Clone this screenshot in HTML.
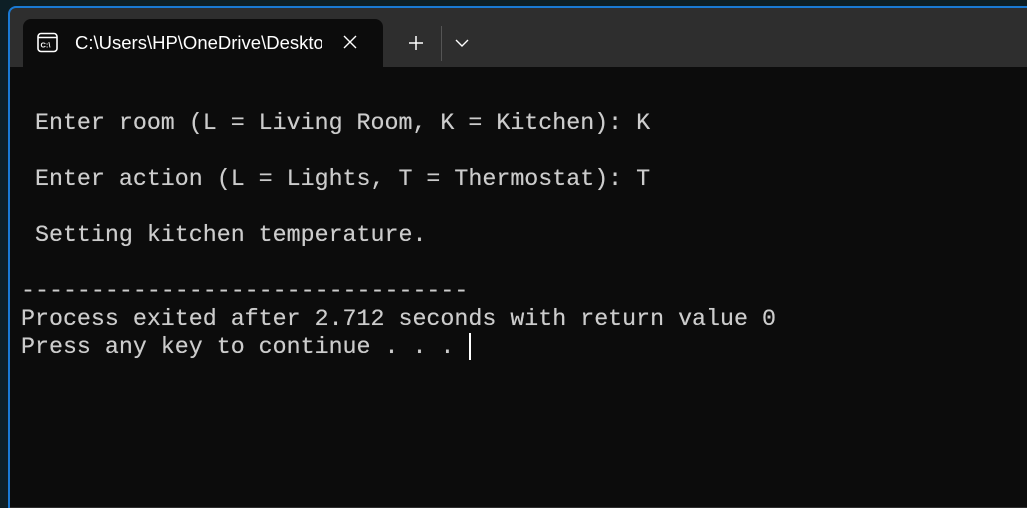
<!DOCTYPE html>
<html><head><style>
html,body{margin:0;padding:0;width:1027px;height:496px;overflow:hidden;background:#0d1f26;}
.win{position:absolute;left:8px;top:6px;width:1030px;height:500px;border:2px solid #1a7ad4;border-right:none;border-bottom:none;border-top-left-radius:8px;background:#2e2e2e;}
.term{position:absolute;left:10px;top:67px;width:1020px;height:440px;background:#0c0c0c;}
.tab{position:absolute;left:23px;top:19px;width:360px;height:48px;background:#0c0c0c;border-radius:8px 8px 0 0;}
.tabtext{position:absolute;left:75px;top:32px;font:18.5px "Liberation Sans",sans-serif;color:#fff;width:247px;overflow:hidden;white-space:nowrap;}
.t{position:absolute;font:23.3px "Liberation Mono",monospace;color:#cccccc;white-space:pre;line-height:28px;text-shadow:0 0 0.4px #ccc;}
</style></head><body>
<div class="win"></div>
<div class="term"></div>
<div class="tab"></div>
<svg style="position:absolute;left:37px;top:32px" width="22" height="22" viewBox="0 0 22 22">
<rect x="1" y="1.5" width="19" height="18" rx="3" fill="none" stroke="#fff" stroke-width="1.6"/>
<line x1="1" y1="5.5" x2="20" y2="5.5" stroke="#fff" stroke-width="1.4"/>
<text x="3.5" y="15.5" font-family="Liberation Sans" font-size="7.5" font-weight="bold" fill="#fff">C:\</text>
</svg>
<div class="tabtext">C:\Users\HP\OneDrive\Desktop</div>
<svg style="position:absolute;left:343px;top:35px" width="14" height="14"><path d="M1 1L13 13M13 1L1 13" stroke="#fff" stroke-width="1.4"/></svg>
<svg style="position:absolute;left:408px;top:35px" width="16" height="16"><path d="M8 1V15M1 8H15" stroke="#fff" stroke-width="1.5"/></svg>
<div style="position:absolute;left:441px;top:26px;width:1px;height:35px;background:#555"></div>
<svg style="position:absolute;left:455px;top:38px" width="14" height="10"><path d="M1 2L7 8L13 2" fill="none" stroke="#fff" stroke-width="1.4"/></svg>
<div class="t" style="left:21px;top:109px"> Enter room (L = Living Room, K = Kitchen): K</div>
<div class="t" style="left:21px;top:165px"> Enter action (L = Lights, T = Thermostat): T</div>
<div class="t" style="left:21px;top:221px"> Setting kitchen temperature.</div>
<div class="t" style="left:21px;top:277px">--------------------------------</div>
<div class="t" style="left:21px;top:305px">Process exited after 2.712 seconds with return value 0</div>
<div class="t" style="left:21px;top:333px">Press any key to continue . . . </div>
<div style="position:absolute;left:469px;top:333px;width:1.5px;height:27px;background:#fff"></div>
</body></html>
